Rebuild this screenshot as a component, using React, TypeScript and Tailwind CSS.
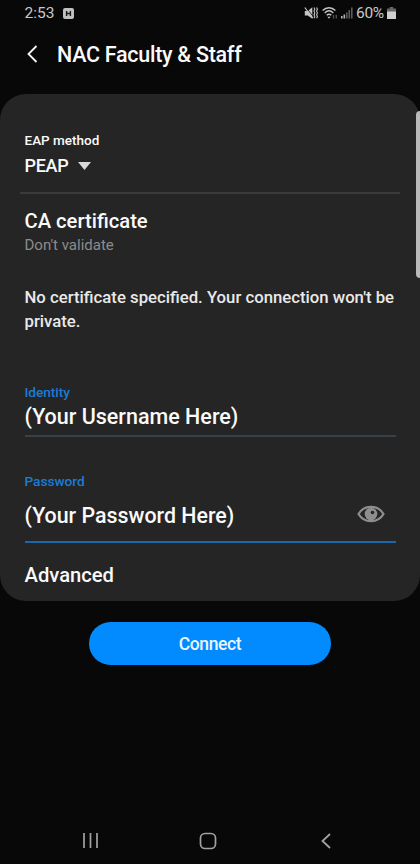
import type { ReactNode } from "react";

function StatusBar() {
  return (
    <div className="flex h-[26px] items-center pl-[24.5px] pr-[24px] font-normal text-[#c8c8c8]">
      <span className="w-[30px] whitespace-nowrap text-[15.5px] leading-[26px]">2:53</span>
      <svg className="ml-[8px]" width="11" height="11" viewBox="0 0 11 11">
        <rect width="11" height="11" rx="2" fill="#c0c0c0" />
        <path d="M3.6 3v5M7.4 3v5M3.6 5.5h3.8" stroke="#181818" strokeWidth="1.4" />
      </svg>
      <div className="ml-auto flex items-center">
        <svg width="14" height="14" viewBox="0 0 14 14" fill="none" stroke="#c4c4c4">
          <path d="M0.8 5h3L8.3 1.2v11.6L3.8 9.5h-3z" fill="#c4c4c4" stroke="none" />
          <path d="M2 1.2l7 9.3" stroke="#080808" strokeWidth="0.8" />
          <path d="M0.8 1.5l8 10.5" strokeWidth="1.2" />
          <path d="M10 1.5l.8 1.8-.8 1.8.8 1.8-.8 1.8.8 1.8-.8 1.8M12.6 1.5l.8 1.8-.8 1.8.8 1.8-.8 1.8.8 1.8-.8 1.8" strokeWidth="1.1" />
        </svg>
        <svg className="ml-[4px]" width="16" height="14" viewBox="0 0 16 14" fill="none" stroke="#c4c4c4" strokeWidth="1.4">
          <path d="M.6 4.6C4.3.8 9.7.8 13.4 4.6M2.7 7c2.6-2.6 6-2.6 8.6 0M4.7 9.3c1.4-1.3 3.2-1.3 4.6 0" />
          <path d="M5.4 10.8h3.2L7 12.8z" fill="#c4c4c4" stroke="none" />
          <path d="M11.5 9v3.5M14.3 9v3.5" stroke="#505050" />
        </svg>
        <svg className="ml-[3px]" width="12" height="12" viewBox="0 0 12 12">
          <path d="M0 9h1.6v2.5H0zM2.5 7.5h1.6v4H2.5z" fill="#b4b4b4" />
          <path d="M5 5.5h1.6v6H5zM7.5 3h1.6v8.5H7.5zM10 .5h1.6v11H10z" fill="#5c5c5c" />
        </svg>
        <span className="ml-[3px] w-[28px] whitespace-nowrap text-[15.5px] leading-[26px] tracking-[-0.3px]">60%</span>
        <svg className="ml-[3px]" width="9" height="12" viewBox="0 0 9 12">
          <path d="M2.7 0h3.6v1.5H9V5H0V1.5h2.7z" fill="#666" />
          <path d="M0 4.5h9V12H0z" fill="#cfcfcf" />
        </svg>
      </div>
    </div>
  );
}

function FieldLabel({ children }: { children: ReactNode }) {
  return <div className="h-4 text-[13.7px] leading-4 tracking-[-0.05px] text-[#1c7cd6]">{children}</div>;
}

function NavigationBar() {
  return (
    <nav className="mt-auto flex h-[47px] items-center pl-[82px] pr-[87px]">
      <svg width="17" height="17" viewBox="0 0 17 17" stroke="#a2a2a2" strokeWidth="1.7">
        <path d="M2 1v15M8.5 1v15M15 1v15" />
      </svg>
      <svg className="ml-[100px]" width="18" height="18" viewBox="0 0 18 18" fill="none" stroke="#a2a2a2" strokeWidth="1.7">
        <rect x="1.5" y="1.5" width="15" height="15" rx="4.5" />
      </svg>
      <svg className="ml-auto" width="14" height="18" viewBox="0 0 14 18" fill="none" stroke="#a2a2a2" strokeWidth="1.8">
        <path d="M11 2L3.5 9l7.5 7" />
      </svg>
    </nav>
  );
}

export default function App() {
  return (
    <div className="relative flex h-[864px] w-[420px] flex-col overflow-hidden bg-[#080808] font-[Roboto,sans-serif] font-medium text-[#fafafa]">
      <StatusBar />
      <header className="flex h-[68px] items-start pl-[26px] pt-[14px]">
        <svg className="mt-[4px]" width="12" height="20" viewBox="0 0 12 20" fill="none" stroke="#f5f5f5" strokeWidth="1.8">
          <path d="M10.5 2L2.5 10l8 8" />
        </svg>
        <h1 className="ml-[19px] mt-px whitespace-nowrap text-[21.5px] leading-[28px] tracking-[-0.28px]">NAC Faculty &amp; Staff</h1>
      </header>
      <main className="flex h-[507px] shrink-0 flex-col rounded-[26px] bg-[#252525] px-[24.5px] pt-[38px]">
        <div className="h-4 text-[13.5px] leading-4">EAP method</div>
        <div className="mt-[6px] flex h-6 items-center text-[18px] leading-6">
          <span className="w-[44px] tracking-[-0.3px]">PEAP</span>
          <svg className="ml-[9.5px]" width="13" height="8" viewBox="0 0 13 8">
            <path d="M0 0h13L6.5 8z" fill="#d8d8d8" />
          </svg>
        </div>
        <div className="-mx-[4.5px] mt-[14px] h-[2px] shrink-0 bg-[#3b3b3b]" />
        <div className="mt-[13px] h-7 text-[20.2px] leading-7">CA certificate</div>
        <div className="mt-[1px] h-[18px] text-[15px] font-normal leading-[18px] text-[#8c8c8c]">Don't validate</div>
        <p className="mt-[31px] h-12 whitespace-nowrap text-[16.73px] leading-6 text-[#e9e9e9]">
          No certificate specified. Your connection won't be<br />private.
        </p>
        <div className="mt-[51px]"><FieldLabel>Identity</FieldLabel></div>
        <div className="mt-[3px] h-8 text-[21.5px] leading-7">(Your Username Here)</div>
        <div className="h-[2px] shrink-0 bg-[#384147]" />
        <div className="mt-[36px]"><FieldLabel>Password</FieldLabel></div>
        <div className="mt-[13px] flex h-[39px] items-start justify-between pr-[11px] text-[21.4px] leading-7">
          <span>(Your Password Here)</span>
          <svg className="mt-[3px]" width="28" height="18" viewBox="0 0 28 18">
            <path d="M1.5 9C7-.5 21-.5 26.5 9 21 18.5 7 18.5 1.5 9z" fill="none" stroke="#8e8e8e" strokeWidth="2.2" />
            <circle cx="14" cy="9" r="6.3" fill="#8e8e8e" />
            <circle cx="15.5" cy="7.5" r="1.8" fill="#252525" />
          </svg>
        </div>
        <div className="h-[2px] shrink-0 bg-[#1b67ab]" />
        <div className="mt-[18px] h-7 text-[20.2px] leading-7">Advanced</div>
      </main>
      <button className="ml-[89px] mt-[21px] h-[43px] w-[242px] shrink-0 rounded-full bg-[#028bfe] pt-px text-[17.5px] leading-[42px] tracking-[-0.4px] text-[#eaf6ff]">Connect</button>
      <NavigationBar />
      <div className="absolute right-0 top-[111px] h-[167px] w-[4px] rounded-l-[4px] bg-[#b9b9b9]" />
    </div>
  );
}
